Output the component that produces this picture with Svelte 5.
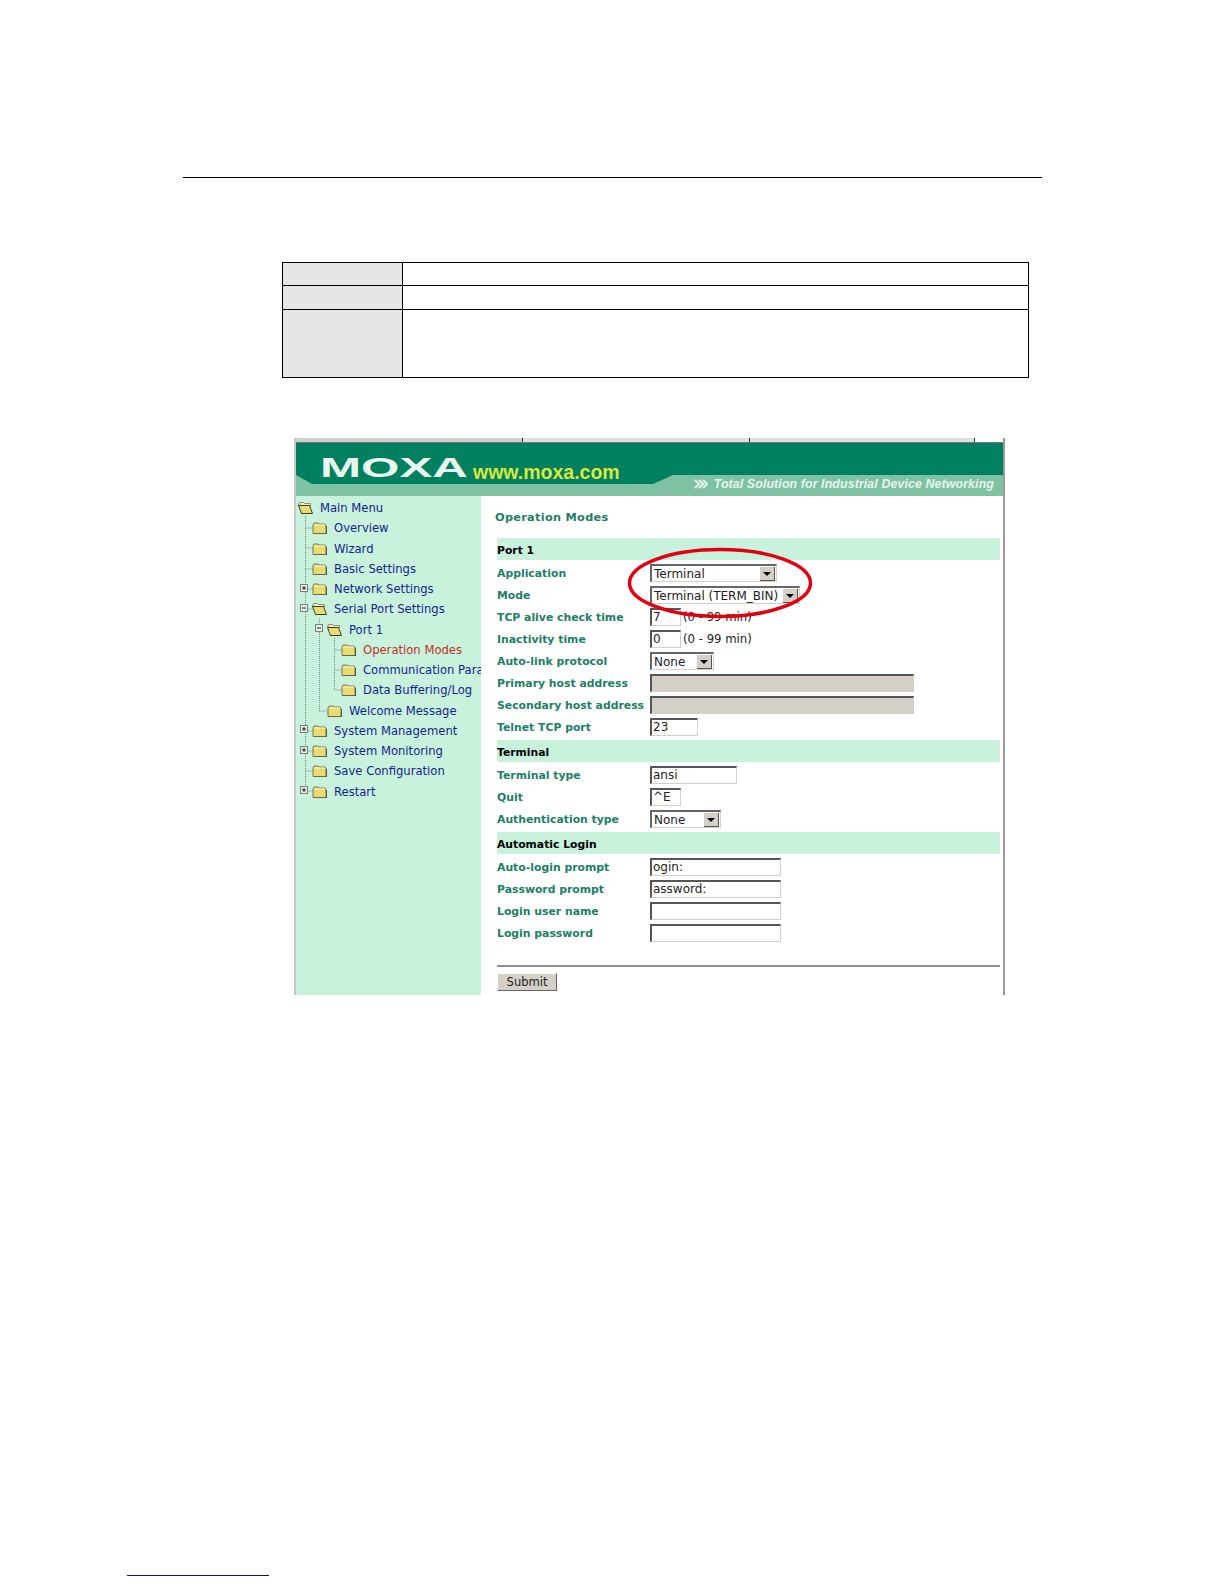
<script>
  const tree = [
    { label: 'Main Menu', level: 0, open: true },
    { label: 'Overview', level: 1 },
    { label: 'Wizard', level: 1 },
    { label: 'Basic Settings', level: 1 },
    { label: 'Network Settings', level: 1, toggle: '+' },
    { label: 'Serial Port Settings', level: 1, toggle: '-', open: true },
    { label: 'Port 1', level: 2, toggle: '-', open: true },
    { label: 'Operation Modes', level: 3, active: true },
    { label: 'Communication Para', level: 3 },
    { label: 'Data Buffering/Log', level: 3 },
    { label: 'Welcome Message', level: 2 },
    { label: 'System Management', level: 1, toggle: '+' },
    { label: 'System Monitoring', level: 1, toggle: '+' },
    { label: 'Save Configuration', level: 1 },
    { label: 'Restart', level: 1, toggle: '+' }
  ];

  const sections = [
    {
      title: 'Port 1',
      rows: [
        { label: 'Application', type: 'select', value: 'Terminal', width: 127 },
        { label: 'Mode', type: 'select', value: 'Terminal (TERM_BIN)', width: 150 },
        { label: 'TCP alive check time', type: 'input', value: '7', width: 31, note: '(0 - 99 min)' },
        { label: 'Inactivity time', type: 'input', value: '0', width: 31, note: '(0 - 99 min)' },
        { label: 'Auto-link protocol', type: 'select', value: 'None', width: 64 },
        { label: 'Primary host address', type: 'disabled', width: 264 },
        { label: 'Secondary host address', type: 'disabled', width: 264 },
        { label: 'Telnet TCP port', type: 'input', value: '23', width: 48 }
      ]
    },
    {
      title: 'Terminal',
      rows: [
        { label: 'Terminal type', type: 'input', value: 'ansi', width: 87 },
        { label: 'Quit', type: 'input', value: '^E', width: 31 },
        { label: 'Authentication type', type: 'select', value: 'None', width: 71 }
      ]
    },
    {
      title: 'Automatic Login',
      rows: [
        { label: 'Auto-login prompt', type: 'input', value: 'ogin:', width: 131 },
        { label: 'Password prompt', type: 'input', value: 'assword:', width: 131 },
        { label: 'Login user name', type: 'input', value: '', width: 131 },
        { label: 'Login password', type: 'input', value: '', width: 131 }
      ]
    }
  ];
</script>

<div class="page">
  <div class="rule"></div>

  <div class="spec">
    <div class="spec-row r1"><div class="spec-key"></div><div></div></div>
    <div class="spec-row r2"><div class="spec-key"></div><div></div></div>
    <div class="spec-row r3"><div class="spec-key"></div><div></div></div>
  </div>

  <div class="shot">
    <div class="strip">
      <span class="seg first"></span>
      <span class="seg mid"></span>
      <span class="seg last"></span>
    </div>
    <div class="banner">
      <div class="banner-top">
        <span class="logo">MOXA</span>
        <span class="url">www.moxa.com</span>
      </div>
      <div class="banner-band">
        <svg class="chev" width="14" height="10" viewBox="0 0 14 10">
          <path d="M1 1l4 4-4 4M5 1l4 4-4 4M9 1l4 4-4 4" fill="none" stroke="#e6f5ee" stroke-width="2" />
        </svg>
        <span class="slogan">Total Solution for Industrial Device Networking</span>
      </div>
    </div>

    <div class="body">
      <nav class="side">
        <svg class="lines" width="185" height="310" viewBox="0 0 185 310">
          <path
            d="M9.5 20V295M9.5 32h7M9.5 52h7M9.5 73h7M9.5 93h7M9.5 113h7M9.5 235h7M9.5 255h7M9.5 275h7M9.5 295h7M23.5 122V215M23.5 215h8M38.5 142V194M38.5 154h7M38.5 174h7M38.5 194h7"
            fill="none" stroke="#6f8f80" stroke-dasharray="1 1" />
        </svg>
        {#each tree as item}
          <div class="node lv{item.level}">
            {#if item.toggle}
              <svg class="toggle" width="8" height="8" viewBox="0 0 8 8">
                <rect x="0.5" y="0.5" width="7" height="7" fill="#e3efe8" stroke="#7c7c7c" />
                <path d={item.toggle === '+' ? 'M2 4h4M4 2v4' : 'M2 4h4'} stroke="#222" />
              </svg>
            {/if}
            <svg class="folder" width="15" height="12" viewBox="0 0 15 12">
              {#if item.open}
                <path d="M0.5 2.5l1-2h4l1 1h6v2H3z" fill="#f6f0bc" stroke="#77775c" stroke-width="0.8" />
                <path d="M0.5 3.5h11l3 8H3.5z" fill="#e8dc70" stroke="#3c3c30" />
              {:else}
                <path d="M1 3l1-2h4l1 1h6l1 1v8.500H1z" fill="#e8dc70" stroke="#77775c" />
                <path d="M2 3h11" stroke="#fff6c4" />
                <path d="M14.500 4v8H2" fill="none" stroke="#55554a" />
              {/if}
            </svg>
            <span class="node-label" class:active={item.active}>{item.label}</span>
          </div>
        {/each}
      </nav>

      <main class="content">
        <h1>Operation Modes</h1>
        {#each sections as section}
          <div class="band">{section.title}</div>
          {#each section.rows as row}
            <div class="row">
              <span class="row-label">{row.label}</span>
              {#if row.type === 'select'}
                <span class="select" style="width: {row.width}px">
                  <span class="select-value">{row.value}</span>
                  <span class="arrow"></span>
                </span>
              {:else if row.type === 'disabled'}
                <span class="field disabled" style="width: {row.width}px"></span>
              {:else}
                <span class="field" style="width: {row.width}px">{row.value}</span>
                {#if row.note}<span class="note">{row.note}</span>{/if}
              {/if}
            </div>
          {/each}
        {/each}
        <div class="sep"></div>
        <div class="submit">Submit</div>
      </main>
    </div>

    <svg class="ring" width="186" height="78" viewBox="0 0 186 78">
      <ellipse cx="93" cy="39" rx="90.500" ry="33.500" fill="none" stroke="#e0000f" stroke-width="3.500" />
    </svg>
  </div>

  <div class="foot"></div>
</div>

<style>
  :global(body) {
    margin: 0;
    background: #fff;
  }
  .page {
    width: 1224px;
    height: 1584px;
    overflow: hidden;
    font-family: "DejaVu Sans", Verdana, sans-serif;
  }
  .rule {
    margin: 177px 0 0 183px;
    width: 859px;
    height: 1px;
    background: #000;
  }
  .spec {
    box-sizing: border-box;
    margin: 84px 0 0 282px;
    width: 747px;
    border: 1px solid #000;
    border-bottom: 0;
  }
  .spec-row {
    display: grid;
    grid-template-columns: 120px 1fr;
    border-bottom: 1px solid #000;
  }
  .r1 { height: 22px; }
  .r2 { height: 23px; }
  .r3 { height: 67px; }
  .spec-key {
    background: #e6e6e6;
    border-right: 1px solid #000;
  }
  .shot {
    position: relative;
    box-sizing: border-box;
    margin: 60px 0 0 294px;
    width: 711px;
    height: 557px;
    overflow: hidden;
    border-left: 2px solid #c8c8c8;
    border-right: 2px solid #999;
  }
  .strip {
    display: flex;
    height: 5px;
    border-bottom: 1px solid #777;
    box-sizing: border-box;
  }
  .seg {
    box-sizing: border-box;
    border-right: 1px solid #333;
    background: #d2cecb;
  }
  .first { width: 227px; }
  .mid { width: 227px; background: #e2dfdd; }
  .last { width: 225px; background: #e2dfdd; }
  .banner {
    background: #7fc2a3;
    height: 53px;
  }
  .banner-top {
    background: #00805f;
    height: 41px;
    display: flex;
    align-items: baseline;
    padding: 11px 0 0 24px;
    box-sizing: border-box;
    clip-path: polygon(0 0, 100% 0, 100% 32px, 377px 32px, 357px 100%, 16px 100%, 0 32px);
  }
  .logo {
    flex: 0 0 153px;
    font-family: "Liberation Sans", sans-serif;
    font-size: 28px;
    line-height: 28px;
    font-weight: 700;
    color: #e8f8f0;
    transform: scaleX(1.76);
    transform-origin: left center;
  }
  .url {
    font-family: "Liberation Sans", sans-serif;
    font-size: 19.5px;
    font-weight: 700;
    color: #d8e83c;
    transform: translateY(2px);
  }
  .banner-band {
    height: 0;
    display: flex;
    justify-content: flex-end;
    align-items: center;
    gap: 6px;
    padding-right: 9px;
  }
  .slogan {
    font-family: "Liberation Sans", sans-serif;
    font-size: 12.4px;
    font-weight: 700;
    font-style: italic;
    letter-spacing: 0.1px;
    color: #e6f5ee;
    white-space: nowrap;
  }
  .body {
    display: flex;
    height: 499px;
  }
  .side {
    position: relative;
    flex: 0 0 185px;
    box-sizing: border-box;
    padding-top: 2px;
    background: #c9f2dd;
    overflow: hidden;
  }
  .lines {
    position: absolute;
    left: 0;
    top: 0;
  }
  .node {
    position: relative;
    height: 20.25px;
    display: flex;
    align-items: center;
    white-space: nowrap;
  }
  .lv0 { padding-left: 2px; }
  .lv1 { padding-left: 16px; }
  .lv2 { padding-left: 31px; }
  .lv3 { padding-left: 45px; }
  .toggle {
    position: absolute;
    margin: -3px 0 0 -12px;
  }
  .folder {
    flex: none;
    margin-right: 7px;
  }
  .node-label {
    font-size: 11.6px;
    color: #14248f;
  }
  .node-label.active {
    color: #c0301f;
  }
  .content {
    flex: 1;
    padding: 0 3px 0 16px;
    min-width: 0;
  }
  h1 {
    margin: 0 0 0 -2px;
    padding: 14px 0 0 0;
    height: 40px;
    box-sizing: border-box;
    font-size: 11.3px;
    line-height: 16px;
    font-weight: 700;
    letter-spacing: 0.3px;
    color: #1f7f68;
  }
  .band {
    height: 22px;
    line-height: 25px;
    margin: 2px 0;
    background: #c9f2dd;
    font-size: 10.8px;
    font-weight: 700;
    color: #000;
  }
  .row {
    height: 22px;
    display: flex;
    align-items: center;
    font-size: 12px;
    white-space: nowrap;
  }
  .row-label {
    flex: 0 0 153px;
    font-size: 10.85px;
    font-weight: 700;
    color: #1b8066;
  }
  .field {
    box-sizing: border-box;
    height: 18px;
    line-height: 15px;
    padding-left: 1px;
    border: 1px solid #d4d0c8;
    border-top: 2px solid #555;
    border-left: 2px solid #555;
    background: #fff;
    color: #222;
    overflow: hidden;
  }
  .field.disabled {
    background: #d4d0c8;
  }
  .note {
    margin-left: 2px;
    font-size: 11.7px;
    color: #222;
  }
  .select {
    box-sizing: border-box;
    height: 18px;
    display: flex;
    align-items: center;
    justify-content: space-between;
    border: 1px solid #d4d0c8;
    border-top: 2px solid #666;
    border-left: 2px solid #666;
    background: #fff;
    color: #222;
  }
  .select-value {
    padding-left: 2px;
  }
  .arrow {
    position: relative;
    flex: none;
    width: 15px;
    height: 14px;
    margin-right: 1px;
    background: #d4d0c8;
    border-right: 1px solid #555;
    border-bottom: 1px solid #555;
    box-sizing: border-box;
  }
  .arrow::after {
    content: "";
    position: absolute;
    left: 3px;
    top: 5px;
    border: 4px solid transparent;
    border-top: 4px solid #000;
    border-bottom: 0;
  }
  .sep {
    margin-top: 21px;
    height: 2px;
    background: #8d8d8d;
  }
  .submit {
    margin-top: 6px;
    width: 60px;
    height: 18px;
    box-sizing: border-box;
    line-height: 16px;
    text-align: center;
    font-size: 11.5px;
    color: #222;
    background: #d4d0c8;
    border: 1px solid #fff;
    border-right-color: #666;
    border-bottom-color: #666;
  }
  .ring {
    position: absolute;
    left: 331px;
    top: 106px;
  }
  .foot {
    margin: 580px 0 0 127px;
    width: 142px;
    height: 1px;
    background: #0a1488;
  }
</style>
